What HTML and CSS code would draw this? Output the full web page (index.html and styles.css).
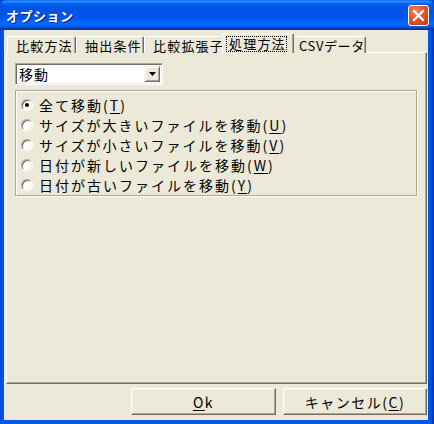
FILE: index.html
```html
<!DOCTYPE html>
<html lang="ja">
<head>
<meta charset="utf-8">
<title>オプション</title>
<link rel="stylesheet" href="styles.css">
</head>
<body>
<div class="window">
  <div class="titlebar">
    <span class="title">オプション</span>
    <span class="close">
      <svg width="21" height="21" viewBox="0 0 21 21"><path d="M6 6 L15 15 M15 6 L6 15" stroke="#fff" stroke-width="2.2" stroke-linecap="square"/></svg>
    </span>
  </div>
  <div class="client">
    <div class="tabs">
      <div class="tab t1">比較方法</div>
      <div class="tab t2">抽出条件</div>
      <div class="tab t3">比較拡張子</div>
      <div class="tab active"><span class="focus">処理方法</span></div>
      <div class="tab t5">CSVデータ</div>
    </div>
    <div class="panel">
      <div class="combo">
        <span class="combo-text">移動</span>
        <span class="combo-btn"><svg width="7" height="4" viewBox="0 0 7 4"><path d="M0 0 H7 L3.5 4 Z" fill="#000"/></svg></span>
      </div>
      <div class="group">
        <div class="row"><span class="radio checked"></span><span>全て移動(<u>T</u>)</span></div>
        <div class="row"><span class="radio"></span><span>サイズが大きいファイルを移動(<u>U</u>)</span></div>
        <div class="row"><span class="radio"></span><span>サイズが小さいファイルを移動(<u>V</u>)</span></div>
        <div class="row"><span class="radio"></span><span>日付が新しいファイルを移動(<u>W</u>)</span></div>
        <div class="row"><span class="radio"></span><span>日付が古いファイルを移動(<u>Y</u>)</span></div>
      </div>
    </div>
    <div class="buttons">
      <div class="btn ok"><span><u>O</u>k</span></div>
      <div class="btn cancel"><span>キャンセル(<u>C</u>)</span></div>
    </div>
  </div>
</div>
</body>
</html>
```
FILE: styles.css
```css
* { box-sizing: border-box; }
html, body { margin: 0; padding: 0; }
body {
  width: 434px;
  height: 424px;
  overflow: hidden;
  background: #0a4bd6;
  font-family: "MS UI Gothic", "Noto Sans CJK JP", "DejaVu Sans", sans-serif;
  color: #000;
}
.window {
  width: 434px;
  height: 424px;
  display: flex;
  flex-direction: column;
  background: linear-gradient(to right, #0845d8 0px, #0055ea 2px, #0055ea 430px, #0036b0 434px);
  border-radius: 7px 7px 0 0;
}
.titlebar {
  height: 30px;
  flex: none;
  display: flex;
  align-items: center;
  padding: 0 5px 0 6px;
  border-radius: 7px 7px 0 0;
  background: linear-gradient(to bottom, #0058ee 0%, #3593ff 4%, #288eff 6%, #127dff 8%, #036ffc 10%, #0262ee 14%, #0057e5 20%, #0054e3 24%, #0055eb 56%, #005bf5 66%, #026afe 76%, #0062ef 86%, #0052d6 92%, #0040ab 94%, #003092 100%);
}
.title {
  flex: 1;
  color: #fff;
  font-weight: bold;
  font-size: 13px;
  letter-spacing: 0.5px;
  text-shadow: 1px 1px #0a1e8c;
  padding-top: 1px;
}
.close {
  width: 21px;
  height: 21px;
  margin-top: 1px;
  border: 1px solid #fff;
  border-radius: 3px;
  background: radial-gradient(circle at 35% 30%, #f08a6a 0%, #e2552f 45%, #c23a14 100%);
  display: flex;
  align-items: center;
  justify-content: center;
}
.close svg { display: block; margin: -1px; }
.client {
  flex: 1;
  margin: 0 6px 4px 4px;
  background: #ece9d8;
  display: flex;
  flex-direction: column;
  padding: 4px 0 0 2px;
}
.tabs {
  height: 19px;
  display: flex;
  align-items: flex-end;
  padding-left: 1px;
  position: relative;
  z-index: 1;
  margin-bottom: -1px;
}
.tab {
  height: 17px;
  font-size: 13px;
  letter-spacing: 1.2px;
  line-height: 15px;
  padding: 1px 0 0 8px;
  border-top: 1px solid #fff;
  border-left: 1px solid #fff;
  border-right: 1px solid #716f64;
  box-shadow: inset -1px 0 #aca899;
  border-radius: 2px 2px 0 0;
  white-space: nowrap;
  background: #ece9d8;
}
.t1 { width: 69px; }
.t2 { width: 68px; }
.t3 { width: 80px; }
.t5 { width: 74px; padding-left: 6px; letter-spacing: 0.6px; }
.tab.active {
  height: 20px;
  width: 72px;
  margin: 0 -2px 0 -2px;
  padding: 2px 0 0 4px;
  position: relative;
  z-index: 2;
}
.focus {
  display: inline-block;
  outline: 1px dotted #000;
  outline-offset: 0;
  padding: 0 0 0 2px;
  line-height: 14px;
}
.panel {
  height: 332px;
  flex: none;
  margin-right: 1px;
  border-top: 1px solid #fff;
  border-left: 1px solid #fff;
  border-right: 1px solid #716f64;
  border-bottom: 1px solid #716f64;
  box-shadow: inset -1px -1px #aca899;
  padding: 10px 8px 0 8px;
}
.combo {
  width: 148px;
  height: 22px;
  display: flex;
  align-items: center;
  background: #fff;
  border-top: 1px solid #aca899;
  border-left: 1px solid #aca899;
  border-right: 1px solid #fff;
  border-bottom: 1px solid #fff;
  box-shadow: inset 1px 1px #716f64, inset -1px -1px #f1efe2;
  padding: 2px 2px 2px 3px;
}
.combo-text {
  flex: 1;
  font-size: 14px;
  letter-spacing: 1px;
  line-height: 16px;
}
.combo-btn {
  width: 16px;
  height: 16px;
  display: flex;
  align-items: center;
  justify-content: center;
  background: #ece9d8;
  border-top: 1px solid #f1efe2;
  border-left: 1px solid #f1efe2;
  border-right: 1px solid #716f64;
  border-bottom: 1px solid #716f64;
  box-shadow: inset 1px 1px #fff, inset -1px -1px #aca899;
}
.combo-btn svg { display: block; }
.group {
  margin-top: 5px;
  height: 106px;
  margin-right: 1px;
  border: 1px solid #aca899;
  box-shadow: inset 1px 1px #fff, 1px 1px #fff;
  padding: 4px 0 0 5px;
}
.row {
  height: 20px;
  display: flex;
  align-items: center;
  font-size: 14px;
  letter-spacing: 2px;
  white-space: nowrap;
}
.row u, .btn u { text-underline-offset: 2px; }
.radio {
  width: 12px;
  height: 12px;
  flex: none;
  margin-right: 6px;
  border-radius: 50%;
  background: #fff;
  border: 1px solid;
  border-color: #aca899 #fff #fff #aca899;
  box-shadow: inset 1px 1px #716f64, inset -1px -1px #f1efe2;
  display: flex;
  align-items: center;
  justify-content: center;
}
.radio.checked::after {
  content: "";
  width: 4px;
  height: 4px;
  border-radius: 50%;
  background: #000;
}
.buttons {
  display: flex;
  justify-content: flex-end;
  gap: 7px;
  margin-top: 4px;
  padding-right: 1px;
}
.btn {
  height: 27px;
  display: flex;
  align-items: center;
  justify-content: center;
  font-size: 14px;
  letter-spacing: 1.5px;
  border-top: 1px solid #fff;
  border-left: 1px solid #fff;
  border-right: 1px solid #716f64;
  border-bottom: 1px solid #716f64;
  box-shadow: inset -1px -1px #aca899, inset 1px 1px #f1efe2;
  background: #ece9d8;
}
.ok { width: 145px; }
.cancel { width: 144px; }
```
